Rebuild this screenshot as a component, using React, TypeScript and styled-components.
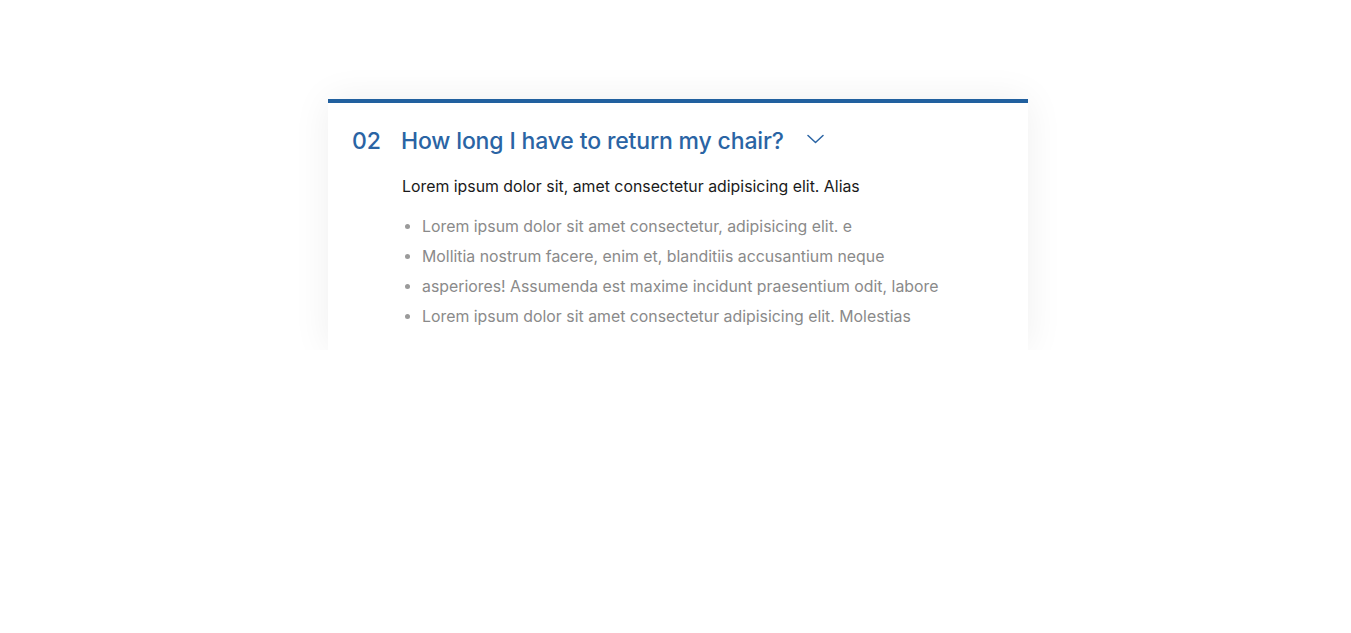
import React from "react";
import styled, { createGlobalStyle } from "styled-components";

const Global = createGlobalStyle`
  html, body { margin: 0; padding: 0; background: #ffffff; }
  body { font-family: Inter, "Noto Sans", sans-serif; }
  * { box-sizing: border-box; }
`;

const Page = styled.div`
  display: flex;
  justify-content: center;
  padding: 99px 0 0 5px;
`;

const Card = styled.section`
  width: 700px;
  background: #ffffff;
  border-top: 4px solid #21609f;
  box-shadow: 0 0 36px rgba(0, 0, 0, 0.065);
  padding: 23px 24px 18px 24px;
`;

const Header = styled.div`
  display: flex;
  align-items: center;
  height: 30px;
  color: #2a64a4;
  font-size: 23px;
  font-weight: 500;
  letter-spacing: -0.15px;
`;

const Num = styled.span`
  width: 49px;
`;

const Title = styled.h2`
  margin: 0;
  font: inherit;
`;

const Chevron = styled.span`
  display: flex;
  margin-left: 23px;
  margin-top: -4px;
  color: #2a64a4;
`;

const Body = styled.div`
  padding-left: 50px;
  padding-top: 16px;
`;

const Lead = styled.p`
  margin: 0 0 10px;
  font-size: 15.85px;
  line-height: 30px;
  color: #1a1a1a;
`;

const List = styled.ul`
  margin: 0;
  padding-left: 20px;
`;

const Item = styled.li`
  font-size: 15.85px;
  line-height: 30px;
  color: #8a8a8a;
  &::marker { color: #9a9a9a; }
`;

const items = [
  "Lorem ipsum dolor sit amet consectetur, adipisicing elit. e",
  "Mollitia nostrum facere, enim et, blanditiis accusantium neque",
  "asperiores! Assumenda est maxime incidunt praesentium odit, labore",
  "Lorem ipsum dolor sit amet consectetur adipisicing elit. Molestias",
];

export default function App() {
  return (
    <>
      <Global />
      <Page>
        <Card>
          <Header>
            <Num>02</Num>
            <Title>How long I have to return my chair?</Title>
            <Chevron>
              <svg width="17" height="10" viewBox="0 0 17 10" fill="none">
                <path d="M1 1.5l7.5 7 7.5-7" stroke="currentColor" strokeWidth="1.5" strokeLinecap="round" strokeLinejoin="round" />
              </svg>
            </Chevron>
          </Header>
          <Body>
            <Lead>Lorem ipsum dolor sit, amet consectetur adipisicing elit. Alias</Lead>
            <List>
              {items.map((t) => (
                <Item key={t}>{t}</Item>
              ))}
            </List>
          </Body>
        </Card>
      </Page>
    </>
  );
}
